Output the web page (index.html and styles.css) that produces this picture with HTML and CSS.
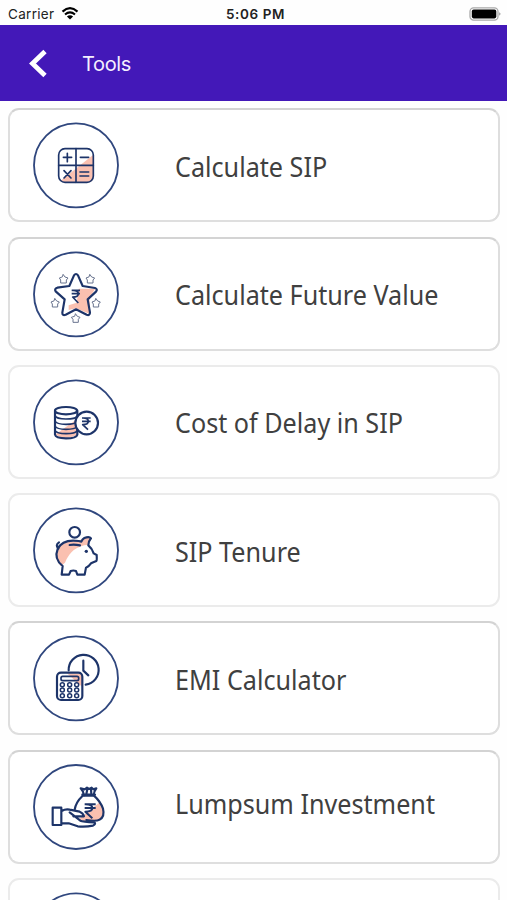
FILE: index.html
```html
<!DOCTYPE html>
<html lang="en">
<head>
    <meta charset="UTF-8">
    <meta name="viewport" content="width=device-width, initial-scale=1.0">
    <title>Tools</title>
    <link rel="stylesheet" href="styles.css">
</head>
<body>
    <div class="status-bar">
        <div class="carrier">
            <span>Carrier</span>
            <svg class="wifi" viewBox="0 0 18 13">
                <path d="M1.5 4.6Q9-2.2 16.5 4.6M4 7.5Q9 3.2 14 7.5" fill="none" stroke="#000" stroke-width="2.1"/>
                <path d="M5.9 9.4Q9 6.9 12.1 9.4L9 12.6Z"/>
            </svg>
        </div>
        <div class="time">5:06 PM</div>
        <svg class="battery" viewBox="0 0 32 14">
            <rect x="1" y=".9" width="28" height="12.2" rx="3.6" fill="#fff" stroke="#a9a9a9" stroke-width="1.3"/>
            <rect x="2.8" y="2.6" width="24.5" height="8.8" rx="1.8"/>
            <path d="M30.3 5.3Q32.6 7 30.3 8.7Z" fill="#888"/>
        </svg>
    </div>
    <header class="navbar">
        <svg class="back" viewBox="0 0 20 30"><path d="M17 2.5L4.5 14.5L17 26.5" fill="none" stroke="#fff" stroke-width="4.8"/></svg>
        <h1>Tools</h1>
    </header>
    <main class="tools">
        <div class="card">
            <svg class="icon" viewBox="0 0 300 288">
                <circle class="ring" cx="150" cy="142" r="126"/>
                <path class="tint" d="M202 110V176Q202 193 185 193H116Q108 192 104 188Z"/>
                <rect x="98" y="92" width="104" height="101" rx="19"/>
                <path d="M150 92V193M98 142H202M112 118H137M124 106V131M163 118H188M162 162H188M162 174H188M114 158L135 180M135 158L114 180"/>
            </svg>
            <span class="label">Calculate SIP</span>
        </div>
        <div class="card">
            <svg class="icon" viewBox="0 1 300 288">
                <circle class="ring" cx="150" cy="143" r="126"/>
                <path class="tint" d="M158 126H208L190 153L193 203L150 185L128 190V176L152 168Z"/>
                <path class="thick" d="M144 86Q150 78 156 86L170 118L207 124Q216 127 210 135L185 158L192 198Q191 208 182 204L150 188L119 204Q109 208 109 198L116 158L89 134Q84 126 94 123L130 118Z"/>
                <path class="rupee" d="M137 131H162M137 141H162M141 131Q157 131 157 141T140 151L157 169"/>
                <g class="mini">
                    <path d="M112 84L117 91L126 94L121 100V109H104V100L100 94L108 91Z"/>
                    <path d="M192 84L197 91L206 94L201 100V109H184V100L180 94L188 91Z"/>
                    <path d="M87 156L92 163L100 166L95 172V181H79V172L75 166L83 163Z"/>
                    <path d="M210 156L215 163L223 166L218 172V181H202V172L198 166L206 163Z"/>
                    <path d="M149 202L154 209L162 212L157 218V227H141V218L136 212L145 209Z"/>
                </g>
            </svg>
            <span class="label">Calculate Future Value</span>
        </div>
        <div class="card">
            <svg class="icon" viewBox="0 2 300 288">
                <circle class="ring" cx="150" cy="144" r="126"/>
                <path class="tint" d="M87 181L146 139L153 145V182Q120 198 87 181Z"/>
                <ellipse class="thick" cx="120" cy="109" rx="33" ry="11"/>
                <path class="thick" d="M87 109V181Q89 192 120 192T154 181V109"/>
                <path d="M87 124Q91 134 120 134T152 126M87 140Q92 150 120 150T152 142M87 155Q92 165 120 165T153 157M87 169Q92 178 120 178T153 170"/>
                <circle class="thick white" cx="182" cy="146" r="34"/>
                <path class="rupee" d="M168 131H194M168 141H194M171 131Q187 131 187 141T170 151L186 166"/>
            </svg>
            <span class="label">Cost of Delay in SIP</span>
        </div>
        <div class="card">
            <svg class="icon" viewBox="0 3 300 288">
                <circle class="ring" cx="150" cy="145" r="126"/>
                <path class="tint" d="M104 192Q82 166 94 142Q110 114 158 118Q176 102 194 107L187 128Q136 132 117 182Z"/>
                <circle class="thick" cx="146" cy="91" r="16"/>
                <path class="thick" d="M158 117Q110 110 95 141Q83 171 110 192L107 218H129L134 207Q142 204 150 207L154 218H176L180 197Q188 194 195 184L211 177Q213 175 212 159L203 154Q199 140 187 130Q187 118 195 109Q190 102 175 108Q169 111 166 119Z"/>
                <path class="thick" d="M97 140Q87 129 99 121"/>
                <path d="M131 129Q143 126 162 130" class="thick"/>
                <circle class="solid" cx="181" cy="148" r="5"/>
            </svg>
            <span class="label">SIP Tenure</span>
        </div>
        <div class="card">
            <svg class="icon" viewBox="0 3 300 288">
                <circle class="ring" cx="150" cy="145" r="126"/>
                <path class="thick" d="M128 121A45 45 0 1 1 179 164M172 92V122L187 136"/>
                <path class="tint" d="M123 130L168 131V170Z"/>
                <rect class="thick" x="93" y="128" width="76" height="82" rx="12"/>
                <rect x="105" y="139" width="53" height="13" rx="5"/>
                <g class="keys">
                    <circle cx="109" cy="164" r="6"/><circle cx="131" cy="164" r="6"/><circle cx="152" cy="164" r="6"/>
                    <circle cx="109" cy="180" r="6"/><circle cx="131" cy="180" r="6"/><circle cx="152" cy="180" r="6"/>
                    <circle cx="109" cy="197" r="6"/><circle cx="131" cy="197" r="6"/><circle cx="152" cy="197" r="6"/>
                </g>
            </svg>
            <span class="label">EMI Calculator</span>
        </div>
        <div class="card">
            <svg class="icon" viewBox="0 5 300 288">
                <circle class="ring" cx="150" cy="146" r="126"/>
                <path class="tint" d="M221 132Q239 154 230 173Q225 188 203 189Q178 191 157 184Z"/>
                <path class="thick" d="M146 154Q149 132 170 112H204Q223 129 231 151Q237 174 221 184Q211 190 181 185"/>
                <path class="thick" d="M174 111Q174 101 164 90L176 93L183 88L189 92L197 88L202 93L211 90Q203 100 203 111M169 109H207M184 93L181 107M195 93L196 107"/>
                <path class="rupee large" d="M176 138H209M176 149H209M179 138Q199 138 199 149T178 160L199 180"/>
                <path class="thick" d="M80 148H106V200H80ZM107 158Q119 151 131 154L161 160Q171 164 174 174H142M131 162L163 187Q170 190 206 192Q210 197 201 202Q179 206 155 204L128 195H107"/>
            </svg>
            <span class="label lump">Lumpsum Investment</span>
        </div>
        <div class="card">
            <svg class="icon" viewBox="0 5 300 288">
                <circle class="ring" cx="150" cy="147" r="126"/>
            </svg>
        </div>
    </main>
</body>
</html>
```
FILE: styles.css
```css
body {
    display: flex;
    flex-direction: column;
    font-family: Inter, "Liberation Sans", sans-serif;
    margin: 0;
    height: 100vh;
    overflow: hidden;
    background-color: #fefefe;
}
.status-bar {
    display: grid;
    grid-template-columns: 1fr auto 1fr;
    align-items: center;
    flex-shrink: 0;
    box-sizing: border-box;
    height: 25px;
    padding: 2px 5px 0 8px;
    color: #222;
    font-size: 13.5px;
}
.carrier {
    display: flex;
    align-items: center;
    gap: 7px;
    letter-spacing: 0.3px;
}
.wifi {
    width: 18px;
    height: 13px;
}
.time {
    font-weight: 600;
    letter-spacing: 0.6px;
    padding-left: 1px;
}
.battery {
    width: 32px;
    height: 14px;
    justify-self: end;
    margin-right: 1px;
}
.navbar {
    display: flex;
    align-items: center;
    flex-shrink: 0;
    gap: 34px;
    box-sizing: border-box;
    height: 76px;
    padding: 2px 0 0 28px;
    background-color: #4318b8;
}
.back {
    width: 20px;
    height: 30px;
}
h1 {
    margin: 0;
    color: #f5efff;
    font-size: 20px;
    font-weight: 400;
    letter-spacing: -0.35px;
}
.tools {
    display: flex;
    flex: 1;
    min-height: 0;
    overflow: hidden;
    flex-direction: column;
    gap: 14.3px;
    padding: 7.3px 7px 0 8px;
}
.card {
    display: flex;
    align-items: center;
    flex-shrink: 0;
    box-sizing: border-box;
    height: 114px;
    padding: 2px 0 0 16px;
    border: 2px solid #dedede;
    border-top-color: #d3d3d3;
    border-radius: 11px;
    background-color: #fff;
}
.card:nth-child(3), .card:nth-child(4), .card:nth-child(7) {
    border-color: #ebebeb;
}
.icon {
    flex-shrink: 0;
    width: 100px;
    height: 96px;
    fill: none;
    stroke: #1d3469;
    stroke-width: 5;
    stroke-linejoin: round;
    stroke-linecap: round;
}
.ring {
    stroke: #30477e;
    stroke-width: 5.5;
}
.thick {
    stroke-width: 6.5;
}
.tint {
    fill: #fac0b0;
    stroke: none;
}
.white {
    fill: #fff;
}
.solid {
    fill: #1d3469;
    stroke: none;
}
.rupee {
    stroke-linecap: butt;
    stroke-width: 5;
}
.large {
    stroke-width: 6;
}
.mini {
    stroke: #69748f;
    stroke-width: 3;
}
.keys {
    stroke-width: 4.5;
}
.label {
    margin-left: 49px;
    padding-top: 1px;
    color: #404040;
    font-family: "Noto Sans", "Open Sans", sans-serif;
    font-size: 27px;
    line-height: 36px;
    white-space: nowrap;
    transform: scaleX(0.932);
    transform-origin: left;
}
.lump {
    padding: 0 0 7px;
}
```
